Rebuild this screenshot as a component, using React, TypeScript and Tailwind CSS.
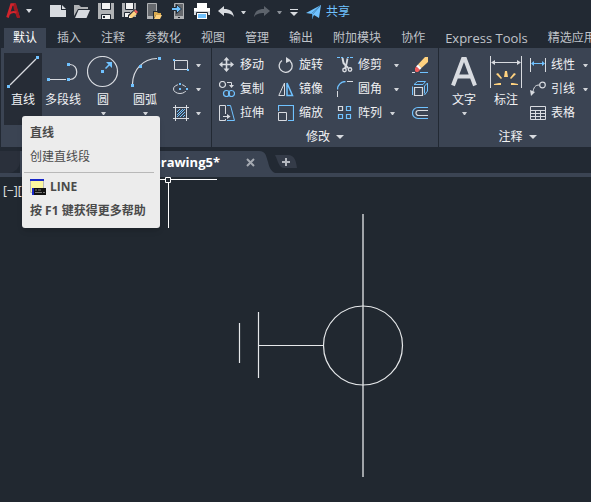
import type { ReactNode } from 'react';

const BLUE = '#70c2ff';
const INK = '#d8dbe0';

type IconProps = { children: ReactNode; size?: number };

const Icon = ({ children, size = 16 }: IconProps) => (
  <svg
    width={size}
    height={size}
    viewBox={`0 0 ${size} ${size}`}
    fill="none"
    stroke={INK}
    className="shrink-0"
    aria-hidden="true"
  >
    {children}
  </svg>
);

const Caret = ({ className = 'text-[#d0d3d8]' }: { className?: string }) => (
  <svg width="5" height="3" viewBox="0 0 5 3" fill="currentColor" className={`shrink-0 ${className}`} aria-hidden="true">
    <path d="M0 0h5L3 3H2z" />
  </svg>
);

const quickActions = [
  {
    name: '新建',
    icon: (
      <Icon>
        <path d="M0 2h11v5h5v7H0z" fill={INK} stroke="none" />
        <path d="M12 2l4 4h-4z" fill={INK} stroke="none" />
      </Icon>
    ),
  },
  {
    name: '打开',
    icon: (
      <Icon>
        <path d="M0 13V2h5l2 2h7v2H4z" fill="#b0b2b5" stroke="none" />
        <path d="M4.500 7H16l-3.500 8H1z" fill={INK} stroke="none" />
      </Icon>
    ),
  },
  {
    name: '保存',
    icon: (
      <Icon>
        <path d="M0 0h16v16H0z" fill="#b0b2b5" stroke="none" />
        <path d="M4 0h8v6H4z" fill="#f2f2f2" stroke="none" />
        <path d="M3.5 0v6.5h9V0M3.5 16v-4.5h9V16" stroke="#222933" />
        <path d="M4 12h8v4H4z" fill="#f2f2f2" stroke="none" />
        <path d="M5 13h2v2H5z" fill="#222933" stroke="none" />
      </Icon>
    ),
  },
  {
    name: '另存为',
    icon: (
      <Icon>
        <path d="M0 0h14v14H0z" fill="#b0b2b5" stroke="none" />
        <path d="M4 0h7v6H4zM3 10h6v4H3z" fill="#f2f2f2" stroke="none" />
        <path d="M3.5 0v6.5h8V0M2.5 14V9.500H8" stroke="#222933" />
        <path d="M6 16v-4l7-6 3 2v2l-7 6z" fill="#222933" stroke="none" />
        <path d="M7 13l5-5 3 3-5 4H7z" fill="#ffd27f" stroke="none" />
        <path d="M12 8l1.500-1.500L16 9l-1.500 1.500z" fill="#f05b5b" stroke="none" />
        <path d="M7 13l2 2H7z" fill="#fff" stroke="none" />
      </Icon>
    ),
  },
  {
    name: '从移动设备打开',
    icon: (
      <Icon>
        <path d="M1.5.5h9v15h-9z" fill="#66696e" stroke="#b0b2b5" />
        <path d="M1 13h6v3H1z" fill="#b0b2b5" stroke="none" />
        <path d="M7 16V8h4l1 1h4v7z" fill="#222933" stroke="none" />
        <path d="M8 15V9h3l1 1h3v2h-5z" fill="#d9a94e" stroke="none" />
        <path d="M10 12h6l-2 4H8z" fill="#ffd27f" stroke="none" />
      </Icon>
    ),
  },
  {
    name: '保存到移动设备',
    icon: (
      <Icon>
        <path d="M4.5.5h9v15h-9z" fill="#66696e" stroke="#b0b2b5" />
        <path d="M4 13h10v3H4z" fill="#b0b2b5" stroke="none" />
        <path d="M8 14h2v1H8z" fill="#222933" stroke="none" />
        <path d="M1.500 4.500h5v-3l5 4.500-5 4.500v-3h-5z" fill={BLUE} stroke="#222933" />
      </Icon>
    ),
  },
  {
    name: '打印',
    icon: (
      <Icon>
        <path d="M3 0h10v5H3z" fill="#fff" stroke="none" />
        <path d="M0 6h16v6H0z" fill="#d8dbe0" stroke="none" />
        <path d="M0 5h16v3H0z" fill="#fff" stroke="none" />
        <path d="M3 9h10v7H3z" fill="#fff" stroke="none" />
        <path d="M2.5 16V9.5h11V16" stroke="#222933" />
        <path d="M4 11h8v4H4z" fill={BLUE} stroke="none" />
      </Icon>
    ),
  },
];

const ribbonTabs = ['默认', '插入', '注释', '参数化', '视图', '管理', '输出', '附加模块', '协作', 'Express Tools', '精选应用'];

const drawShapes = [
  {
    name: '矩形',
    icon: (
      <Icon>
        <path d="M1.5 3.5h13v9h-13z" />
        <path d="M0 2h2v2H0zM14 12h2v2h-2z" fill={BLUE} stroke="none" />
      </Icon>
    ),
  },
  {
    name: '椭圆',
    icon: (
      <Icon>
        <ellipse cx="7" cy="8" rx="6.5" ry="4.5" />
        <path d="M5 2h4v3H5zM12 6h4v4h-4z" fill="#3b4453" stroke="none" />
        <path d="M6 2h2v2H6zM6 7h2v2H6zM13 7h2v2h-2z" fill={BLUE} stroke="none" />
      </Icon>
    ),
  },
  {
    name: '图案填充',
    icon: (
      <Icon>
        <path d="M2.5 0v16M13.5 0v16M0 2.5h16M0 13.5h16" />
        <path d="M4 7l3-3M4 10l6-6M4 12l8-8M7 12l5-5M10 12l2-2" stroke={BLUE} />
      </Icon>
    ),
  },
];

const modifyRows = [
  [
    {
      name: '移动',
      icon: (
        <Icon>
          <path d="M7.500 2v11M2 7.500h11" strokeWidth="1.600" />
          <path d="M7.500 0l3 3.500h-6zM7.500 15l-3-3.500h6zM0 7.500l3.500-3v6zM15 7.500l-3.500 3v-6z" fill={INK} stroke="none" />
        </Icon>
      ),
    },
    {
      name: '旋转',
      icon: (
        <Icon>
          <path d="M4 3.500A6.500 6.500 0 1 0 12 4" strokeWidth="1.300" />
          <path d="M8 0l5 3.500L8 6z" fill={INK} stroke="none" />
        </Icon>
      ),
    },
    {
      name: '修剪',
      caret: 'ml-3',
      icon: (
        <Icon>
          <path d="M0 .5h3m1 0h2m4 0h2m1 0h3" stroke={BLUE} />
          <path d="M5.500 1l1 5 4.500 5" strokeWidth="2" />
          <path d="M10.500 1.500L9.500 7 8 11" strokeWidth="1.800" />
          <circle cx="7.500" cy="13" r="1.700" strokeWidth="1.400" />
          <circle cx="13" cy="12.500" r="1.700" strokeWidth="1.400" />
        </Icon>
      ),
    },
  ],
  [
    {
      name: '复制',
      icon: (
        <Icon>
          <circle cx="3.500" cy="3.500" r="3" strokeWidth="1.200" />
          <path d="M8 1.500h4.500V4" />
          <path d="M10 4h5l-2.500 3z" fill={INK} stroke="none" />
          <circle cx="7.500" cy="12.500" r="3" stroke={BLUE} strokeWidth="1.200" />
          <circle cx="12.500" cy="12.500" r="3" stroke={BLUE} strokeWidth="1.200" />
        </Icon>
      ),
    },
    {
      name: '镜像',
      icon: (
        <Icon>
          <path d="M6.500 2v12.500H.8z" />
          <path d="M9 2v12.500h5.500z" stroke={BLUE} strokeWidth="1.500" />
        </Icon>
      ),
    },
    {
      name: '圆角',
      caret: 'ml-3',
      icon: (
        <Icon>
          <path d="M.5 8.500A8 8 0 0 1 8.500.500" stroke={BLUE} strokeWidth="1.300" />
          <path d="M.5 10v6M10 .500h6" />
        </Icon>
      ),
    },
  ],
  [
    {
      name: '拉伸',
      icon: (
        <Icon>
          <path d="M6.500 9V.500h-6v15h6V14" />
          <path d="M8 .500h3.500l4 15H8" stroke={BLUE} />
          <path d="M4 11.500h5" />
          <path d="M8 9l3.500 2.500L8 14z" fill={INK} stroke="none" />
        </Icon>
      ),
    },
    {
      name: '缩放',
      icon: (
        <Icon>
          <path d="M.5 6V.500h15v15H10" stroke={BLUE} strokeWidth="1.200" />
          <path d="M.5 7.500h8v8h-8z" />
        </Icon>
      ),
    },
    {
      name: '阵列',
      caret: 'ml-2',
      icon: (
        <Icon>
          <path d="M1.500 1.500h4v4h-4z" strokeWidth="1.200" />
          <path d="M9.500 1.500h4v4h-4zM1.500 9.500h4v4h-4zM9.500 9.500h4v4h-4z" stroke={BLUE} strokeWidth="1.200" />
        </Icon>
      ),
    },
  ],
];

const modifyExtras = [
  {
    name: '删除',
    icon: (
      <Icon>
        <path d="M0 15.500h3" />
        <path d="M8 15.500h8" stroke={BLUE} />
        <path d="M16 0v5l-6.500 6L6 7.500 13 0z" fill="#ffd27f" stroke="none" />
        <path d="M6 7.500L9.500 11l-1.800 2L4 9.500z" fill="#fff" stroke="none" />
        <path d="M4.500 9.500L8 13l-2 2H4l-1-1v-3z" fill="#f05b5b" stroke="none" />
      </Icon>
    ),
  },
  {
    name: '分解',
    icon: (
      <Icon>
        <path d="M2.500 6.500h8v8h-8z" strokeWidth="1.200" />
        <path d="M.5 14V5.500M2 3.500L5.500.500h8L11 3.500H2M12.500 12.500V5L15.500 2v8l-3 4" stroke={BLUE} />
      </Icon>
    ),
  },
  {
    name: '偏移',
    icon: (
      <Icon>
        <path d="M16 2.500H6a5.500 5.500 0 0 0 0 11h10" stroke={BLUE} strokeWidth="1.200" />
        <path d="M16 5.500H6.500a2.500 2.500 0 0 0 0 5H16" strokeWidth="1.200" />
      </Icon>
    ),
  },
];

const annotateTools = [
  {
    name: '线性',
    caret: true,
    icon: (
      <Icon>
        <path d="M.5 1v14M15.500 1v14" />
        <path d="M3 6.500h10" stroke={BLUE} />
        <path d="M1 6.500L4 4v5zM15 6.500L12 4v5z" fill={BLUE} stroke="none" />
      </Icon>
    ),
  },
  {
    name: '引线',
    caret: true,
    icon: (
      <Icon>
        <circle cx="12.500" cy="4" r="2.800" strokeWidth="1.200" />
        <path d="M9.500 4C5 4 4 6 2.500 12" />
        <path d="M0 9l5 2-4 4z" fill={INK} stroke="none" />
      </Icon>
    ),
  },
  {
    name: '表格',
    caret: false,
    icon: (
      <Icon>
        <path d="M.5 1.500h15v13H.5zM1 5.500h14M1 8.500h14M1 11.500h14M5.500 5v9M10.500 5v9" />
      </Icon>
    ),
  },
];

type BigToolProps = { name: string; className: string; caret?: boolean; active?: boolean; children: ReactNode };

const BigTool = ({ name, className, caret, active, children }: BigToolProps) => (
  <button
    type="button"
    className={`flex h-18 flex-col items-center pt-[3px] ${className} ${active ? 'bg-[#262c36]' : ''}`}
  >
    <Icon size={32}>{children}</Icon>
    <span className="leading-6">{name}</span>
    {caret && <Caret />}
  </button>
);

const Panel = ({ title, children }: { title?: string; children: ReactNode }) => (
  <section className="flex shrink-0 flex-col border-r border-[#222933] pt-[5px]">
    <div className="flex">{children}</div>
    {title && (
      <button type="button" className="flex items-center justify-center gap-[6px] leading-6">
        {title}
        <svg width="8" height="4" viewBox="0 0 8 4" fill={INK} aria-hidden="true">
          <path d="M0 0h8L4 4z" />
        </svg>
      </button>
    )}
  </section>
);

const QuickAccess = () => (
  <header className="flex h-7 items-start pt-[3px] pl-[6px]">
    <button type="button" aria-label="应用程序菜单" className="flex items-center gap-[6px]">
      <svg width="14" height="16" viewBox="0 0 14 16" aria-hidden="true">
        <path d="M1.500 14.500L5.500 1.500h3L12.500 14.500" fill="none" stroke="#d3242c" strokeWidth="2.600" />
        <path d="M8 .500h2l4 14.500h-3L7.500 5z" fill="#a01a21" />
        <path d="M3 11C5 9 8 8.500 10.500 9.500" fill="none" stroke="#d3242c" strokeWidth="2" />
      </svg>
      <svg width="6" height="4" viewBox="0 0 6 4" fill={INK} aria-hidden="true">
        <path d="M0 0h6L3 4z" />
      </svg>
    </button>
    <div className="ml-[18px] flex gap-2">
      {quickActions.map((action) => (
        <button key={action.name} type="button" aria-label={action.name}>
          {action.icon}
        </button>
      ))}
    </div>
    <div className="ml-2 flex h-[18px] items-center gap-2">
      <button type="button" aria-label="放弃" className="flex items-center gap-[7px]">
        <Icon>
          <path d="M0 7l6-5v3c6 0 9 2 10 8-2-3-5-4-10-4v3z" fill={INK} stroke="none" />
        </Icon>
        <Caret />
      </button>
      <button type="button" aria-label="重做" className="flex items-center gap-[7px]">
        <Icon>
          <path d="M16 7l-6-5v3C4 5 1 7 0 13c2-3 5-4 10-4v3z" fill="#5d636c" stroke="none" />
        </Icon>
        <Caret className="text-[#8b9098]" />
      </button>
      <button type="button" aria-label="自定义快速访问工具栏">
        <svg width="8" height="7" viewBox="0 0 8 7" fill={INK} aria-hidden="true">
          <path d="M0 0h8v1H0zM0 3h8L4 7z" />
        </svg>
      </button>
      <button type="button" className="flex items-center gap-1 text-[#70c2ff]">
        <Icon>
          <path d="M0 9L15 1 6 10zM6 10l9-9-7 10-2 4zM15 1l-2 13-5-3z" fill={BLUE} stroke="none" />
          <path d="M5.500 9.500L14 2 6.500 10.500V15" stroke="#2f6f9f" strokeWidth=".6" />
        </Icon>
        共享
      </button>
    </div>
  </header>
);

const RibbonTabs = () => (
  <nav className="flex gap-[2px] pl-1">
    {ribbonTabs.map((tab, i) => (
      <button
        key={tab}
        type="button"
        className={`h-5 shrink-0 px-[9px] ${i === 0 ? 'bg-[#3b4453] text-white' : 'text-[#c0c4ca]'} ${
          tab === 'Express Tools' ? 'text-[13px]' : ''
        }`}
      >
        {tab}
      </button>
    ))}
  </nav>
);

const Ribbon = () => (
  <div className="flex h-[99px] overflow-hidden border-l border-[#222933] bg-[#3b4453] text-[#f0f1f3]">
    <Panel>
      <div className="flex pl-[3px]">
        <BigTool name="直线" className="w-[38px]" active>
          <path d="M3 29L29 3" strokeWidth="1.300" />
          <path d="M1 29h3v3H1zM30 0h3v3h-3z" transform="translate(-1 0)" fill={BLUE} stroke="none" />
        </BigTool>
        <BigTool name="多段线" className="w-[42px]">
          <path d="M3 23.500h16M23 8.500c9 0 9 15 0 15" strokeWidth="1.200" />
          <path d="M0 22h3v3H0zM20 22h3v3h-3zM20 7h3v3h-3z" fill={BLUE} stroke="none" />
        </BigTool>
        <BigTool name="圆" className="w-[38px]" caret>
          <circle cx="15.500" cy="15.500" r="15" strokeWidth="1.200" />
          <path d="M18.500 12.500l4-4" stroke={BLUE} strokeWidth="1.600" />
          <path d="M14 14h3v3h-3zM19 6h6v6z" fill={BLUE} stroke="none" />
        </BigTool>
        <BigTool name="圆弧" className="w-[46px]" caret>
          <path d="M3.500 28C4 13 14 3 28 2.500" strokeWidth="1.200" />
          <path d="M2 28h3v3H2zM10 9h3v3h-3zM29 1h3v3h-3z" fill={BLUE} stroke="none" />
        </BigTool>
      </div>
      <div className="flex flex-col pr-[10px] pl-[5px]">
        {drawShapes.map((shape) => (
          <button key={shape.name} type="button" aria-label={shape.name} className="flex h-6 items-center gap-[7px]">
            {shape.icon}
            <Caret />
          </button>
        ))}
      </div>
    </Panel>

    <Panel title="修改">
      <div className="flex flex-col pl-[7px]">
        {modifyRows.map((row) => (
          <div key={row[0].name} className="flex h-6 gap-[14px]">
            {row.map((tool) => (
              <button key={tool.name} type="button" className="flex items-center">
                {tool.icon}
                <span className="pl-[5px]">{tool.name}</span>
                {tool.caret && (
                  <span className={tool.caret}>
                    <Caret />
                  </span>
                )}
              </button>
            ))}
          </div>
        ))}
      </div>
      <div className="flex flex-col pr-[10px] pl-[13px]">
        {modifyExtras.map((tool) => (
          <button key={tool.name} type="button" aria-label={tool.name} className="flex h-6 items-center">
            {tool.icon}
          </button>
        ))}
      </div>
    </Panel>

    <Panel title="注释">
      <div className="flex pl-1">
        <BigTool name="文字" className="w-[42px]" caret>
          <path d="M5 29.500L15 3h2l10 26.500M8 20.500h16" strokeWidth="4" />
        </BigTool>
        <BigTool name="标注" className="w-[42px]">
          <path d="M.5 0v32M31.500 0v32M3 6.500h26" />
          <path d="M1 6.500L5 4v5zM31 6.500L27 4v5z" fill={INK} stroke="none" />
          <path
            d="M15 15h2l1 6h-4zM6 18l2-1 4 5-1 1zM26 18l-2-1-4 5 1 1zM4 28l5-1h2v2H4zM28 28l-5-1h-2v2h7z"
            fill="#ffd27f"
            stroke="none"
          />
        </BigTool>
      </div>
      <div className="flex flex-col pr-2 pl-[3px]">
        {annotateTools.map((tool) => (
          <button key={tool.name} type="button" className="flex h-6 items-center">
            {tool.icon}
            <span className="pr-2 pl-[5px]">{tool.name}</span>
            {tool.caret && <Caret />}
          </button>
        ))}
      </div>
    </Panel>
  </div>
);

const FileTabs = () => (
  <div className="flex h-[30px] items-end border-b-4 border-[#3b4453]">
    <div className="h-[22px] w-5 rounded-br-xl bg-[#2a303b]" />
    <div className="flex h-[22px] w-[235px] items-center justify-end gap-[26px] bg-[#3b4453]">
      <span className="text-[13px] font-bold text-white">Drawing5*</span>
      <button type="button" aria-label="关闭">
        <svg width="9" height="9" viewBox="0 0 9 9" stroke="#a5aab2" strokeWidth="2" aria-hidden="true">
          <path d="M1 1l7 7M8 1L1 8" />
        </svg>
      </button>
    </div>
    <svg width="20" height="22" viewBox="0 0 20 22" fill="#3b4453" aria-hidden="true">
      <path d="M0 0h4c7 0 7 5 9 11 1 5 3 9 7 11H0z" />
    </svg>
    <button type="button" aria-label="新图形" className="mb-1">
      <svg width="22" height="14" viewBox="0 0 22 14" aria-hidden="true">
        <path d="M0 0h13c6 0 8 5 9 13H9C4 13 3 6 0 0z" fill="#343b48" />
        <path d="M11 3v8M7 7h8" stroke="#b4b8bf" strokeWidth="2" />
      </svg>
    </button>
  </div>
);

const DrawingArea = () => (
  <main className="relative flex-1 bg-[#212830]">
    <svg className="absolute inset-0 h-full w-full" fill="none" stroke="#e6e8ea" aria-hidden="true">
      <path d="M120 2.500h45M171 2.500h46M168.500 6v45" stroke="#fff" />
      <path d="M165.500.500h5v5h-5z" stroke="#fff" />
      <path d="M363 37v263" stroke="#a0a4a8" strokeWidth="2" />
      <circle cx="363" cy="168.500" r="39.500" strokeWidth="1.200" />
      <path d="M258 168.500h66M258.500 135v66M239.500 146v40" strokeWidth="1.200" />
    </svg>
    <p className="pt-[5px] pl-[3px] leading-[18px] text-[#e6e8ea]">[−][</p>
  </main>
);

const LineTooltip = () => (
  <div
    role="tooltip"
    className="absolute top-[116px] left-[22px] rounded-[3px] bg-[#ececec] py-[5px] text-[#4a4a4a] shadow-md"
  >
    <p className="px-2 leading-6 font-bold">直线</p>
    <p className="px-2 leading-6">创建直线段</p>
    <hr className="mt-[3px] mr-[6px] ml-[2px] border-[#b8b8b8]" />
    <p className="flex items-center gap-1 px-2 pt-[2px] leading-6 font-bold">
      <svg width="16" height="16" viewBox="0 0 16 16" aria-hidden="true">
        <path d="M.5.500h13v13H.5z" fill="#fbf7a0" stroke="#b9b9b9" />
        <path d="M0 0h14v2H0z" fill="#1726c8" />
        <path d="M2 9h14v7H2z" fill="#111" />
        <path d="M2 9h2v7H2z" fill="#1726c8" />
        <path d="M5 11h2m1 0h3M5 13.500h7m1 0h2" stroke="#777" />
      </svg>
      LINE
    </p>
    <p className="pr-[14px] pl-2 leading-6 font-bold">按 F1 键获得更多帮助</p>
  </div>
);

const App = () => {
  return (
    <div className="relative flex min-h-screen flex-col overflow-hidden bg-[#222933] font-['Open_Sans','Noto_Sans_CJK_SC',sans-serif] text-[12px] leading-4 whitespace-nowrap">
      <QuickAccess />
      <RibbonTabs />
      <Ribbon />
      <FileTabs />
      <DrawingArea />
      <LineTooltip />
    </div>
  );
};

export default App;
